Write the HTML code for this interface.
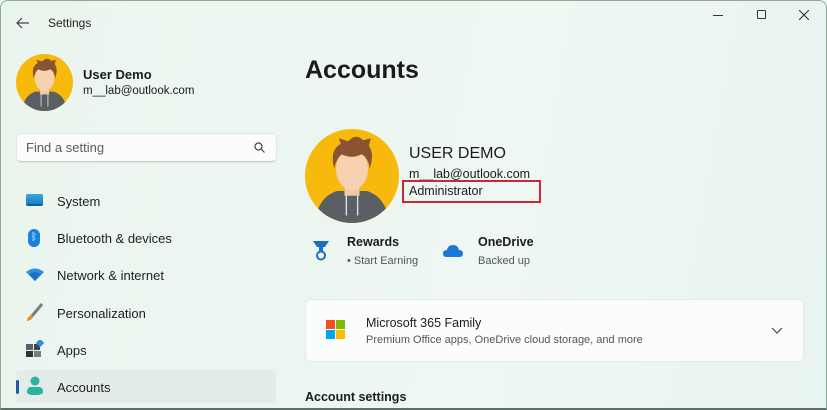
<!DOCTYPE html>
<html><head><meta charset="utf-8"><style>
*{margin:0;padding:0;box-sizing:border-box}
body{width:827px;height:410px;overflow:hidden;font-family:"Segoe UI","Liberation Sans",sans-serif;color:#1b1b1b;background:linear-gradient(100deg,#e9f5ee 0%,#eef7f2 60%,#e8f4f2 100%);position:relative}
.frame{position:absolute;inset:0;border:1px solid #8fa89a;border-bottom:2px solid #5c6f66;border-radius:8px 8px 0 0;pointer-events:none}
.abs{position:absolute}
.nav{position:absolute;left:57px;font-size:13px;color:#1f1f1f}
.ic{position:absolute;left:25px}
</style></head><body>
<svg width="0" height="0" style="position:absolute"><defs>
<symbol id="av" viewBox="0 0 100 100">
<circle cx="50" cy="50" r="50" fill="#f6b90c"/>
<clipPath id="c"><circle cx="50" cy="50" r="50"/></clipPath>
<g clip-path="url(#c)">
<path d="M10 100 Q14 72 34 66 L66 66 Q86 72 90 100Z" fill="#5b5e62"/>
<rect x="42" y="55" width="16" height="16" fill="#f3c9a3"/>
<ellipse cx="50" cy="43" rx="17" ry="22" fill="#f6d2b0"/>
<path d="M31 42 Q26 22 38 16 L36 10 L46 13 Q54 4 62 12 L70 10 L68 18 Q74 26 69 42 Q67 30 60 27 Q50 32 39 27 Q33 32 31 42Z" fill="#8a5331"/>
<path d="M44 70 L44 92 M56 70 L56 92" stroke="#ddd" stroke-width="1.5"/>
</g></symbol></defs></svg>

<svg class="abs" style="left:16px;top:17px" width="14" height="12" viewBox="0 0 14 12"><path d="M13 6H1M6 1L1 6l5 5" stroke="#444" stroke-width="1.2" fill="none"/></svg>
<div class="abs" style="left:48px;top:16px;font-size:12px;color:#222">Settings</div>
<div class="abs" style="left:713px;top:15px;width:10px;border-top:1px solid #333"></div>
<div class="abs" style="left:757px;top:10px;width:9px;height:9px;border:1px solid #333;border-radius:1px"></div>
<svg class="abs" style="left:799px;top:10px" width="10" height="10"><path d="M0 0L10 10M10 0L0 10" stroke="#333" stroke-width="1.1"/></svg>

<svg class="abs" style="left:16px;top:54px" width="57" height="57"><use href="#av"/></svg>
<div class="abs" style="left:83px;top:67px;font-size:13px;font-weight:600">User Demo</div>
<div class="abs" style="left:83px;top:85px;font-size:11.5px">m__lab@outlook.com</div>

<div class="abs" style="left:17px;top:134px;width:259px;height:28px;background:#fafdfb;border-radius:4px;border-bottom:1px solid #c5cdc8;box-shadow:0 0 0 1px #e2e8e4"></div>
<div class="abs" style="left:26px;top:140px;font-size:13px;color:#5b5b5b">Find a setting</div>
<svg class="abs" style="left:254px;top:142px" width="11" height="11"><circle cx="4.5" cy="4.5" r="3.5" stroke="#444" fill="none" stroke-width="1.2"/><path d="M7 7l3.5 3.5" stroke="#444" stroke-width="1.2"/></svg>

<div class="ic" style="left:26px;top:194px;width:17px;height:12px;background:linear-gradient(#3aa7e0,#1a7fc6);border-radius:2px;border-bottom:2px solid #145d8f"></div>
<div class="nav" style="top:194px">System</div>
<div class="ic" style="left:28px;top:229px;width:12px;height:18px;background:#1b7fdc;border-radius:6px;color:#fff;font-size:10px;text-align:center;line-height:18px">ᛒ</div>
<div class="nav" style="top:231px">Bluetooth &amp; devices</div>
<svg class="abs" style="left:25px;top:268px" width="20" height="14" viewBox="0 0 20 14"><path d="M1 4Q10 -3 19 4L10 13Z" fill="#2a8fe0"/><path d="M4 6.5Q10 2 16 6.5L10 13Z" fill="#1b6fc4"/></svg>
<div class="nav" style="top:268px">Network &amp; internet</div>
<svg class="abs" style="left:25px;top:302px" width="20" height="20" viewBox="0 0 20 20"><path d="M17 2L7 14" stroke="#7a7f86" stroke-width="3"/><path d="M6 13Q2 15 2 19Q7 18 8 15Z" fill="#f08a1c"/></svg>
<div class="nav" style="top:306px">Personalization</div>
<svg class="abs" style="left:25px;top:340px" width="20" height="18" viewBox="0 0 20 18"><rect x="1" y="4" width="7" height="6" fill="#5a6068"/><rect x="1" y="11" width="7" height="6" fill="#2e3338"/><rect x="9" y="11" width="7" height="6" fill="#767c84"/><rect x="9" y="4" width="6" height="6" fill="#3c4248"/><rect x="12" y="0" width="6" height="6" fill="#2a8fe0" transform="rotate(45 15 3)"/></svg>
<div class="nav" style="top:343px">Apps</div>
<div class="abs" style="left:16px;top:370px;width:260px;height:33px;background:#e3ece8;border-radius:4px"></div>
<div class="abs" style="left:16px;top:380px;width:3px;height:14px;background:#1a5ea8;border-radius:2px"></div>
<svg class="abs" style="left:26px;top:376px" width="18" height="20" viewBox="0 0 18 20"><circle cx="9" cy="5" r="4.5" fill="#2bb3a0"/><path d="M1 16Q1 11 5 11H13Q17 11 17 16Q17 19 9 19Q1 19 1 16Z" fill="#2bb3a0"/></svg>
<div class="nav" style="top:380px">Accounts</div>

<div class="abs" style="left:305px;top:56px;font-size:25px;font-weight:600">Accounts</div>
<svg class="abs" style="left:305px;top:129px" width="94" height="94"><use href="#av"/></svg>
<div class="abs" style="left:409px;top:145px;font-size:16px">USER DEMO</div>
<div class="abs" style="left:409px;top:167px;font-size:12.5px">m__lab@outlook.com</div>
<div class="abs" style="left:409px;top:184px;font-size:12.5px">Administrator</div>
<div class="abs" style="left:402px;top:180px;width:139px;height:23px;border:2px solid #c9283a"></div>

<svg class="abs" style="left:312px;top:240px" width="18" height="22" viewBox="0 0 18 22"><path d="M1 1H17L13 7H5Z" fill="#1f6fc0"/><rect x="7" y="7" width="4" height="5" fill="#1f6fc0"/><circle cx="9" cy="15.5" r="4" stroke="#1f6fc0" stroke-width="2" fill="none"/></svg>
<div class="abs" style="left:347px;top:235px;font-size:12.5px;font-weight:600">Rewards</div>
<div class="abs" style="left:347px;top:255px;font-size:11px;color:#555">• Start Earning</div>
<svg class="abs" style="left:443px;top:244px" width="20" height="14" viewBox="0 0 20 14"><path d="M4 13Q0 13 0 9.5Q0 6 4 6Q5 1 10 1Q15 1 16 6Q20 6 20 9.5Q20 13 16 13Z" fill="#1a78d4"/></svg>
<div class="abs" style="left:478px;top:235px;font-size:12.5px;font-weight:600">OneDrive</div>
<div class="abs" style="left:478px;top:255px;font-size:11px;color:#555">Backed up</div>

<div class="abs" style="left:306px;top:300px;width:497px;height:61px;background:#fbfdfc;border-radius:5px;box-shadow:0 0 0 1px #e3ebe6"></div>
<div class="abs" style="left:326px;top:320px;width:9px;height:9px;background:#f25022"></div>
<div class="abs" style="left:336px;top:320px;width:9px;height:9px;background:#7fba00"></div>
<div class="abs" style="left:326px;top:330px;width:9px;height:9px;background:#00a4ef"></div>
<div class="abs" style="left:336px;top:330px;width:9px;height:9px;background:#ffb900"></div>
<div class="abs" style="left:366px;top:316px;font-size:12.5px">Microsoft 365 Family</div>
<div class="abs" style="left:366px;top:334px;font-size:11px;color:#555">Premium Office apps, OneDrive cloud storage, and more</div>
<svg class="abs" style="left:771px;top:327px" width="12" height="7"><path d="M1 1l5 5 5-5" stroke="#444" fill="none" stroke-width="1.2"/></svg>

<div class="abs" style="left:305px;top:390px;font-size:12.5px;font-weight:600">Account settings</div>
<div class="frame"></div>
</body></html>
